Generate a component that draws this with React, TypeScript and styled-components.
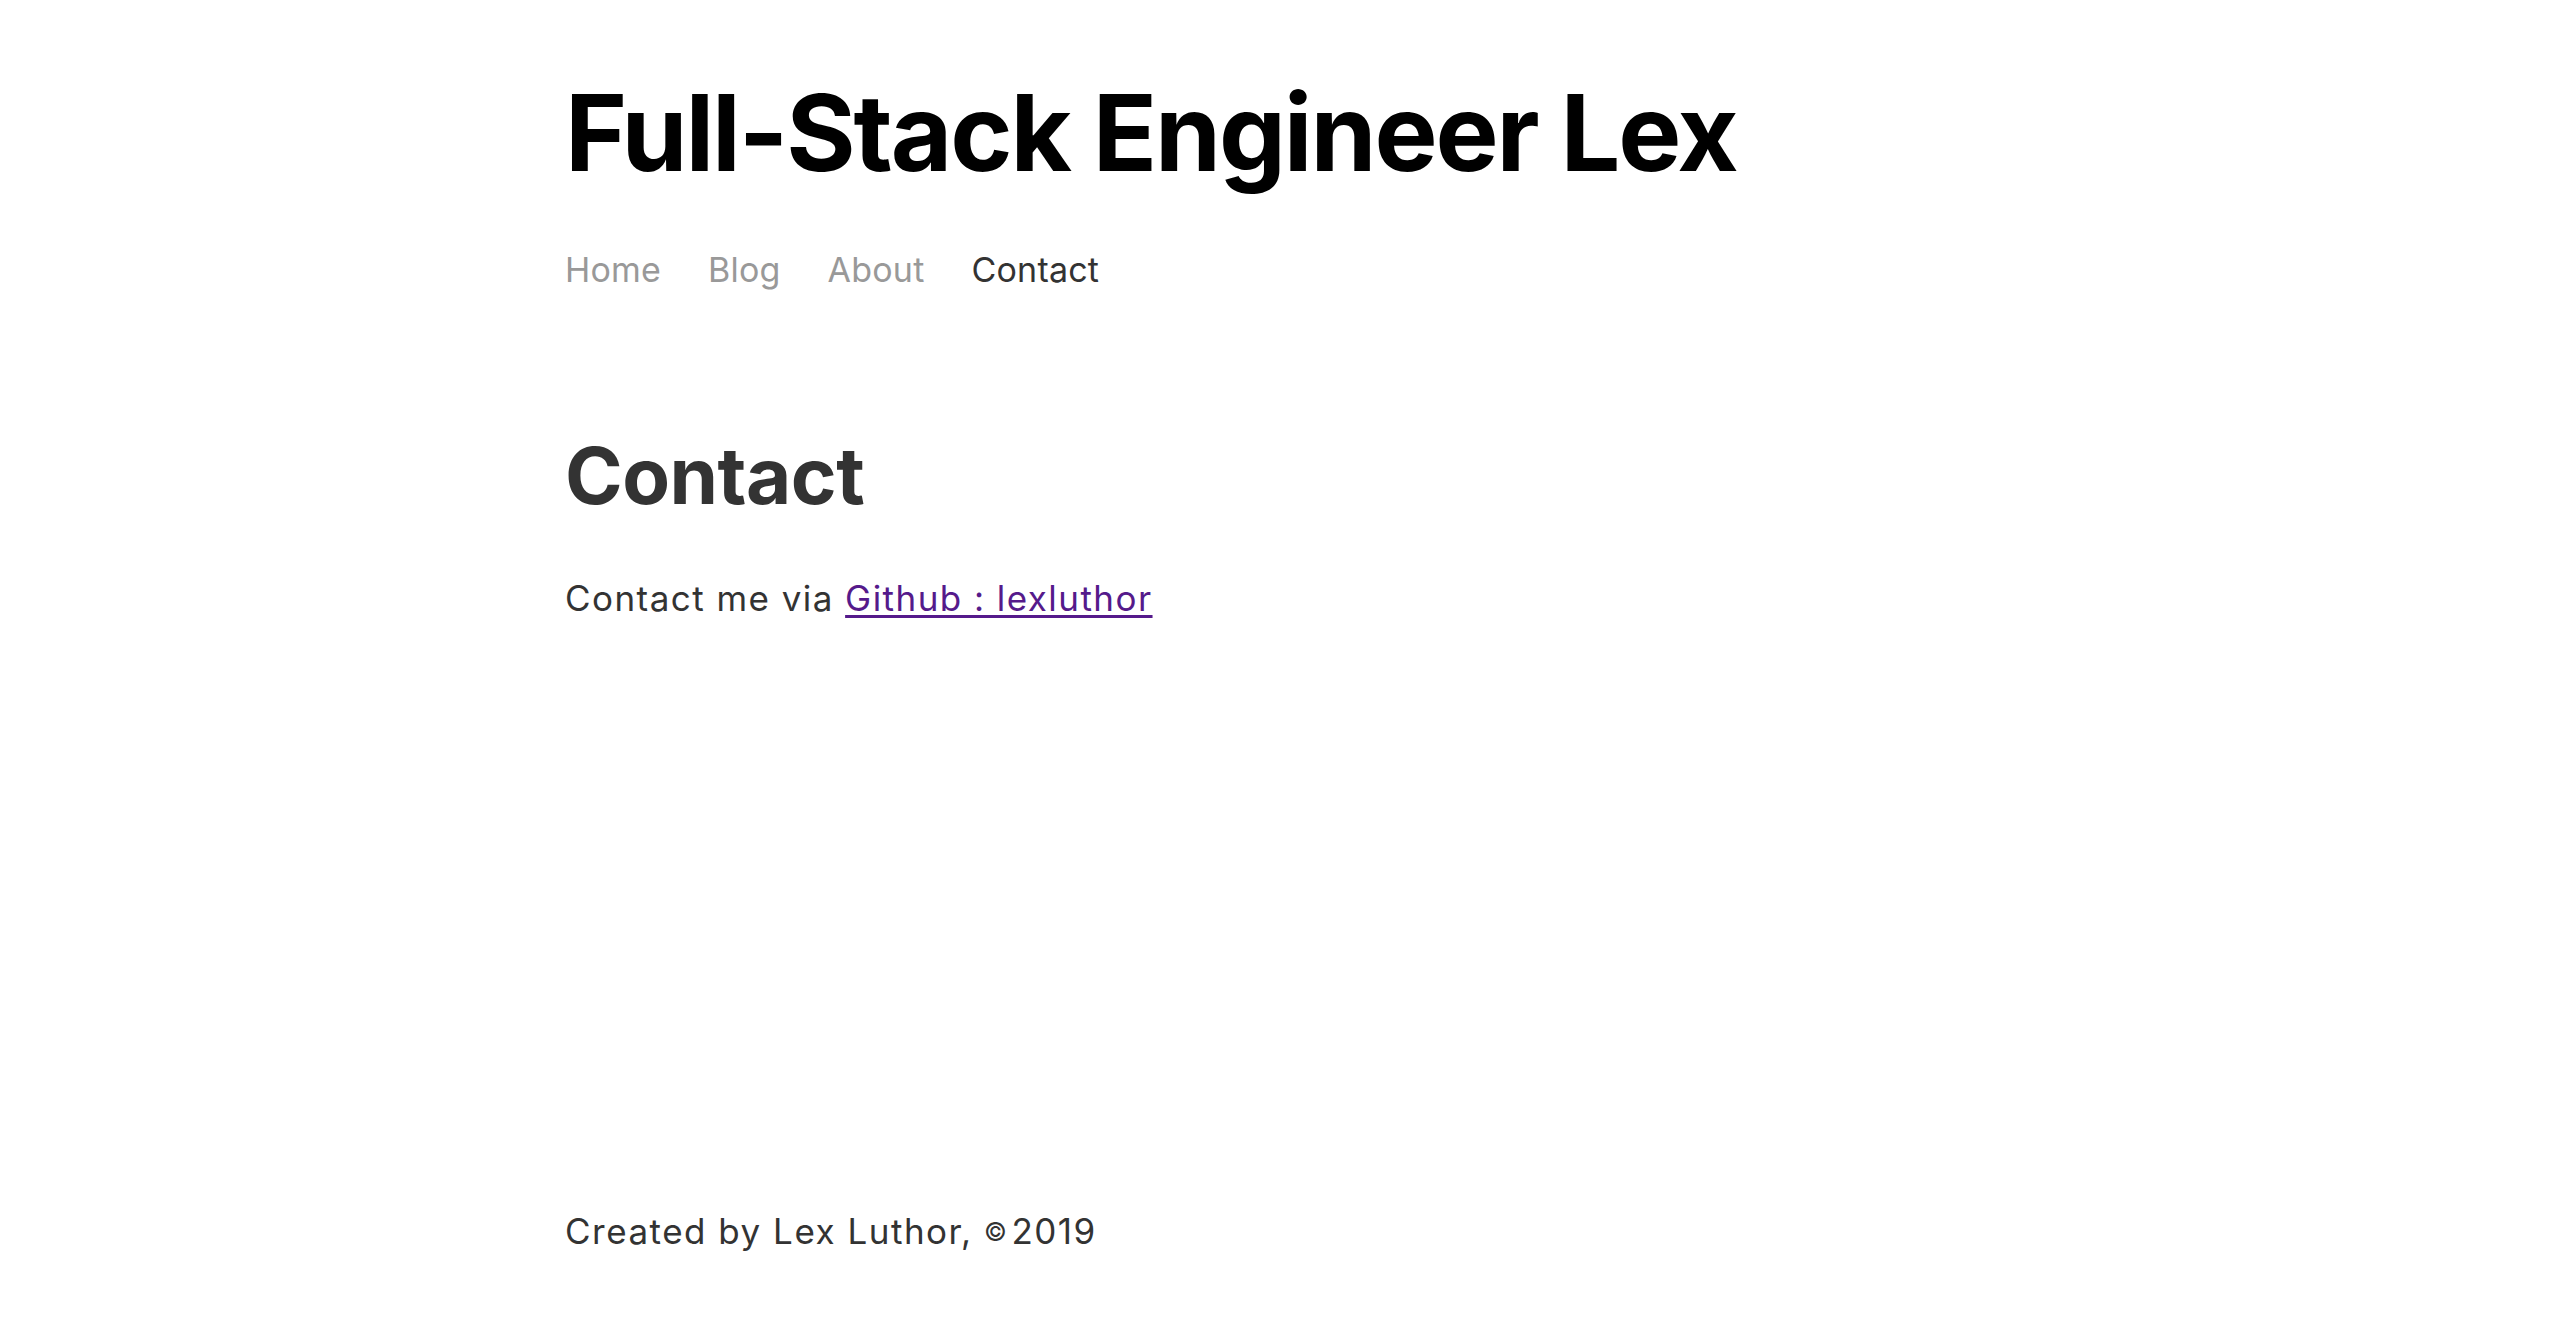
import React from "react";
import styled, { createGlobalStyle } from "styled-components";

const GlobalStyle = createGlobalStyle`
  html, body {
    margin: 0;
    padding: 0;
    background: #ffffff;
  }
  body {
    font-family: Inter, "Noto Sans", "Liberation Sans", sans-serif;
    -webkit-font-smoothing: antialiased;
  }
`;

const Page = styled.div`
  min-height: 100vh;
  box-sizing: border-box;
  display: flex;
  flex-direction: column;
  width: 1430px;
  margin: 0 auto;
  padding: 80px 0 95px;
`;

const Header = styled.header`
  display: flex;
  flex-direction: column;
`;

const SiteTitle = styled.h1`
  margin: 0;
  font-size: 106px;
  line-height: 1;
  font-weight: 700;
  color: #000000;
  letter-spacing: -2.1px;
`;

const Nav = styled.nav`
  display: flex;
  gap: 47px;
  margin-top: 67px;
`;

const NavLink = styled.a<{ $active?: boolean }>`
  font-size: 34px;
  line-height: 1;
  font-weight: 400;
  text-decoration: none;
  letter-spacing: 0.2px;
  color: ${(p) => (p.$active ? "#333333" : "#999999")};
  cursor: pointer;
`;

const Main = styled.main`
  flex: 1;
  display: flex;
  flex-direction: column;
  margin-top: 150px;
`;

const Heading = styled.h2`
  margin: 0;
  font-size: 78px;
  line-height: 1;
  font-weight: 700;
  color: #333333;
  letter-spacing: -0.5px;
`;

const Text = styled.p`
  margin: 66px 0 0;
  font-size: 35px;
  line-height: 1;
  color: #333333;
  letter-spacing: 1.45px;
`;

const Link = styled.a`
  color: #551a8b;
  text-decoration: underline;
  text-underline-offset: 4px;
`;

const Footer = styled.footer`
  font-size: 35px;
  line-height: 1;
  color: #333333;
  letter-spacing: 1.5px;
`;

const Copy = styled.span`
  font-size: 25px;
  vertical-align: 3px;
  margin-right: 3px;
`;

export default function App() {
  return (
    <>
      <GlobalStyle />
      <Page>
        <Header>
          <SiteTitle>Full-Stack Engineer Lex</SiteTitle>
          <Nav>
            <NavLink href="#">Home</NavLink>
            <NavLink href="#">Blog</NavLink>
            <NavLink href="#">About</NavLink>
            <NavLink href="#" $active>
              Contact
            </NavLink>
          </Nav>
        </Header>
        <Main>
          <Heading>Contact</Heading>
          <Text>
            Contact me via <Link href="#">Github : lexluthor</Link>
          </Text>
        </Main>
        <Footer>
          Created by Lex Luthor, <Copy>©</Copy>2019
        </Footer>
      </Page>
    </>
  );
}
